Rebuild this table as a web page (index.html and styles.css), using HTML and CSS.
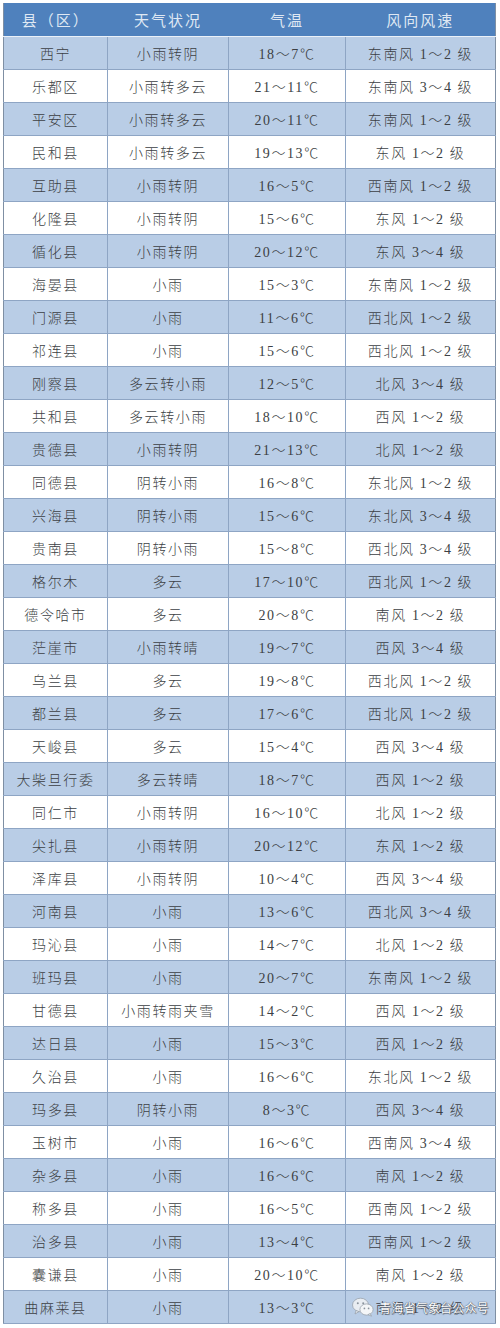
FILE: index.html
```html
<!DOCTYPE html>
<html lang="zh">
<head>
<meta charset="utf-8">
<link rel="stylesheet" href="styles.css">
</head>
<body>
<div class="wrap">
<table class="wx">
<colgroup><col class="c1"><col class="c2"><col class="c3"><col class="c4"></colgroup>
<thead>
<tr><th>县（区）</th><th>天气状况</th><th>气温</th><th>风向风速</th></tr>
</thead>
<tbody>
<tr><td>西宁</td><td>小雨转阴</td><td>18～7℃</td><td>东南风 1～2 级</td></tr>
<tr><td>乐都区</td><td>小雨转多云</td><td>21～11℃</td><td>东南风 3～4 级</td></tr>
<tr><td>平安区</td><td>小雨转多云</td><td>20～11℃</td><td>东南风 1～2 级</td></tr>
<tr><td>民和县</td><td>小雨转多云</td><td>19～13℃</td><td>东风 1～2 级</td></tr>
<tr><td>互助县</td><td>小雨转阴</td><td>16～5℃</td><td>西南风 1～2 级</td></tr>
<tr><td>化隆县</td><td>小雨转阴</td><td>15～6℃</td><td>东风 1～2 级</td></tr>
<tr><td>循化县</td><td>小雨转阴</td><td>20～12℃</td><td>东风 3～4 级</td></tr>
<tr><td>海晏县</td><td>小雨</td><td>15～3℃</td><td>东南风 1～2 级</td></tr>
<tr><td>门源县</td><td>小雨</td><td>11～6℃</td><td>西北风 1～2 级</td></tr>
<tr><td>祁连县</td><td>小雨</td><td>15～6℃</td><td>西北风 1～2 级</td></tr>
<tr><td>刚察县</td><td>多云转小雨</td><td>12～5℃</td><td>北风 3～4 级</td></tr>
<tr><td>共和县</td><td>多云转小雨</td><td>18～10℃</td><td>西风 1～2 级</td></tr>
<tr><td>贵德县</td><td>小雨转阴</td><td>21～13℃</td><td>北风 1～2 级</td></tr>
<tr><td>同德县</td><td>阴转小雨</td><td>16～8℃</td><td>东北风 1～2 级</td></tr>
<tr><td>兴海县</td><td>阴转小雨</td><td>15～6℃</td><td>东北风 3～4 级</td></tr>
<tr><td>贵南县</td><td>阴转小雨</td><td>15～8℃</td><td>西北风 3～4 级</td></tr>
<tr><td>格尔木</td><td>多云</td><td>17～10℃</td><td>西北风 1～2 级</td></tr>
<tr><td>德令哈市</td><td>多云</td><td>20～8℃</td><td>南风 1～2 级</td></tr>
<tr><td>茫崖市</td><td>小雨转晴</td><td>19～7℃</td><td>西风 3～4 级</td></tr>
<tr><td>乌兰县</td><td>多云</td><td>19～8℃</td><td>西北风 1～2 级</td></tr>
<tr><td>都兰县</td><td>多云</td><td>17～6℃</td><td>西北风 1～2 级</td></tr>
<tr><td>天峻县</td><td>多云</td><td>15～4℃</td><td>西风 3～4 级</td></tr>
<tr><td>大柴旦行委</td><td>多云转晴</td><td>18～7℃</td><td>西风 1～2 级</td></tr>
<tr><td>同仁市</td><td>小雨转阴</td><td>16～10℃</td><td>北风 1～2 级</td></tr>
<tr><td>尖扎县</td><td>小雨转阴</td><td>20～12℃</td><td>东风 1～2 级</td></tr>
<tr><td>泽库县</td><td>小雨转阴</td><td>10～4℃</td><td>西风 3～4 级</td></tr>
<tr><td>河南县</td><td>小雨</td><td>13～6℃</td><td>西北风 3～4 级</td></tr>
<tr><td>玛沁县</td><td>小雨</td><td>14～7℃</td><td>北风 1～2 级</td></tr>
<tr><td>班玛县</td><td>小雨</td><td>20～7℃</td><td>东南风 1～2 级</td></tr>
<tr><td>甘德县</td><td>小雨转雨夹雪</td><td>14～2℃</td><td>西风 1～2 级</td></tr>
<tr><td>达日县</td><td>小雨</td><td>15～3℃</td><td>西风 1～2 级</td></tr>
<tr><td>久治县</td><td>小雨</td><td>16～6℃</td><td>东北风 1～2 级</td></tr>
<tr><td>玛多县</td><td>阴转小雨</td><td>8～3℃</td><td>西风 3～4 级</td></tr>
<tr><td>玉树市</td><td>小雨</td><td>16～6℃</td><td>西南风 3～4 级</td></tr>
<tr><td>杂多县</td><td>小雨</td><td>16～6℃</td><td>南风 1～2 级</td></tr>
<tr><td>称多县</td><td>小雨</td><td>16～5℃</td><td>西南风 1～2 级</td></tr>
<tr><td>治多县</td><td>小雨</td><td>13～4℃</td><td>西南风 1～2 级</td></tr>
<tr><td>囊谦县</td><td>小雨</td><td>20～10℃</td><td>南风 1～2 级</td></tr>
<tr><td>曲麻莱县</td><td>小雨</td><td>13～3℃</td><td>南风 1～2 级</td></tr>
</tbody>
</table>
<div class="mark">
<svg class="wechat" width="22" height="20" viewBox="0 0 22 20">
<ellipse cx="8.5" cy="8" rx="8" ry="6.8" fill="#e9edf2" stroke="#9aa3ad" stroke-width="0.8"/>
<path d="M4 13.5 L3 17 L7 14.6 Z" fill="#e9edf2" stroke="#9aa3ad" stroke-width="0.8"/>
<circle cx="5.8" cy="6.3" r="1" fill="#8a939c"/>
<circle cx="11.2" cy="6.3" r="1" fill="#8a939c"/>
<ellipse cx="14.5" cy="12.5" rx="6.6" ry="5.6" fill="#f4f6f8" stroke="#9aa3ad" stroke-width="0.8"/>
<path d="M18.2 16.5 L19.5 19.2 L16 17.6 Z" fill="#f4f6f8" stroke="#9aa3ad" stroke-width="0.8"/>
<circle cx="12.4" cy="11.4" r="0.85" fill="#8a939c"/>
<circle cx="16.6" cy="11.4" r="0.85" fill="#8a939c"/>
</svg>
<span class="mark-text">青海省气象台公众号</span>
</div>
</div>
</body>
</html>
```

FILE: styles.css
```css
html, body {
  margin: 0;
  padding: 0;
  background: #ffffff;
}

.wrap {
  position: relative;
  width: 500px;
  padding: 3px 0 0 3px;
}

.wx {
  width: 492px;
  table-layout: fixed;
  border-collapse: collapse;
  font-family: "Liberation Serif", "Noto Sans CJK SC", serif;
  color: #3c3f44;
  border-left: 1px solid #7f8fa3;
  border-right: 1px solid #7f8fa3;
}

.c1 { width: 104px; }
.c2 { width: 121px; }
.c3 { width: 117px; }
.c4 { width: 150px; }

.wx th {
  height: 33px;
  padding: 0;
  background: #4f81bd;
  color: #dfe8f3;
  font-weight: 400;
  font-size: 15px;
  letter-spacing: 2px;
  text-align: center;
  vertical-align: middle;
  border-bottom: 1px solid #eaf0f8;
}

.wx td {
  height: 32px;
  padding: 0;
  font-size: 14px;
  letter-spacing: 1.6px;
  text-align: center;
  vertical-align: middle;
  border: 1px solid #8ea5c4;
  border-top: 0;
  font-weight: 300;
}

.wx td:first-child { border-left: 0; }
.wx td:last-child { border-right: 0; }

.wx tbody tr:nth-child(odd) td {
  background: #b9cde6;
}

.wx tbody tr:nth-child(even) td {
  background: #ffffff;
}

.mark {
  position: absolute;
  left: 352px;
  top: 1297px;
  display: flex;
  align-items: center;
  gap: 5px;
}

.mark-text {
  font-family: "Noto Sans CJK SC", sans-serif;
  font-size: 12px;
  color: #ffffff;
  letter-spacing: 0.2px;
  text-shadow: 0 0 1px #4a5260, 0 0 1px #4a5260, 1px 1px 1px #6b7380;
}
```
